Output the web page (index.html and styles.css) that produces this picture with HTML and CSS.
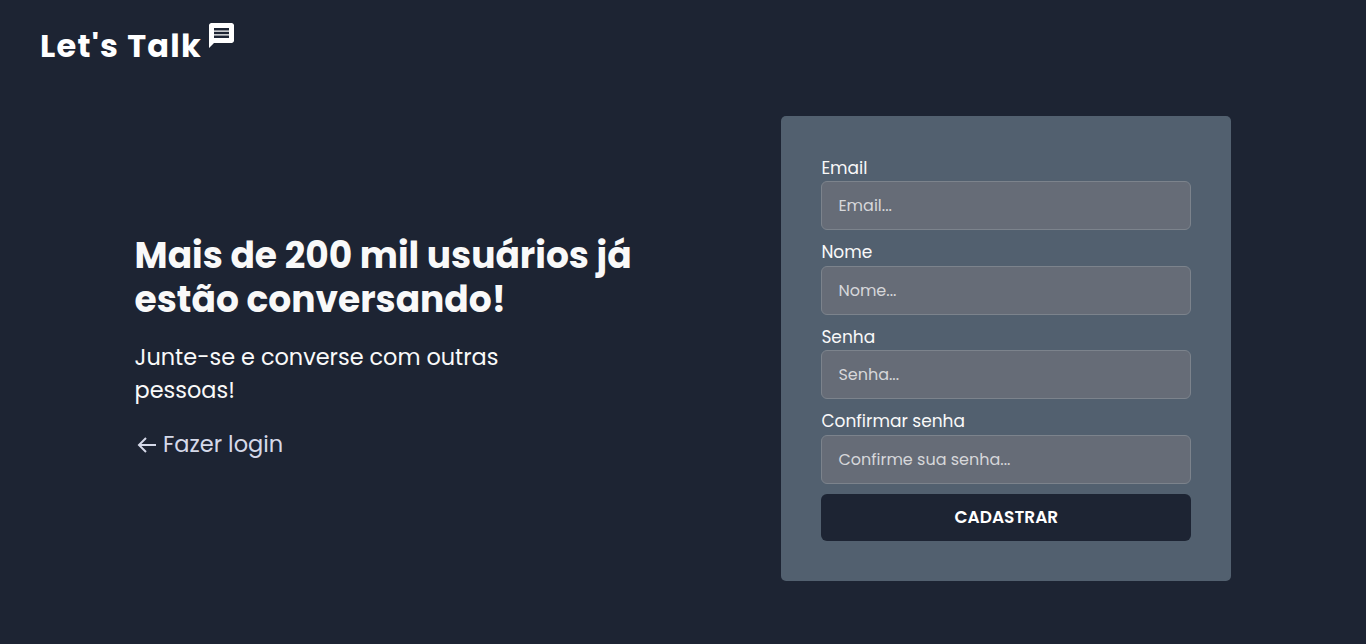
FILE: index.html
```html
<!DOCTYPE html>
<html lang="pt-BR">
<head>
<meta charset="utf-8">
<title>Let's Talk</title>
<link rel="stylesheet" href="styles.css">
</head>
<body>
<header class="header">
  <h1 class="brand">Let's Talk</h1>
  <svg class="brand-icon" viewBox="0 0 24 24" fill="currentColor"><path d="M20 2H4c-1.1 0-1.99.9-1.99 2L2 22l4-4h14c1.1 0 2-.9 2-2V4c0-1.1-.9-2-2-2zm-2 12H6v-2h12v2zm0-3H6V9h12v2zm0-3H6V6h12v2z"/></svg>
</header>
<main class="main">
  <section class="intro">
    <h2 class="title">Mais de 200 mil usuários já<br>estão conversando!</h2>
    <p class="lead">Junte-se e converse com outras<br>pessoas!</p>
    <a class="login"><svg class="arrow" viewBox="0 0 24 24" fill="currentColor"><path d="M21 11H6.414l5.293-5.293-1.414-1.414L2.586 12l7.707 7.707 1.414-1.414L6.414 13H21z"/></svg><span>Fazer login</span></a>
  </section>
  <form class="card">
    <label class="field"><span class="label">Email</span><input class="input" type="email" placeholder="Email..."></label>
    <label class="field"><span class="label">Nome</span><input class="input" type="text" placeholder="Nome..."></label>
    <label class="field"><span class="label">Senha</span><input class="input" type="password" placeholder="Senha..."></label>
    <label class="field"><span class="label">Confirmar senha</span><input class="input" type="password" placeholder="Confirme sua senha..."></label>
    <button class="submit" type="button">CADASTRAR</button>
  </form>
</main>
</body>
</html>
```
FILE: styles.css
```css
* { box-sizing: border-box; margin: 0; padding: 0; }
body {
  min-height: 644px;
  background: #1d2433;
  color: #f9f9f9;
  font-family: Poppins, Inter, "Open Sans", sans-serif;
  overflow: hidden;
}
.header {
  display: flex;
  align-items: flex-start;
  height: 115.8px;
  padding: 20px 40px 0;
  color: #fff;
}
.brand { width: 166px; font-size: 32px; line-height: 51px; font-weight: 700; letter-spacing: 1.25px; white-space: nowrap; }
.brand-icon { width: 30px; height: 30px; transform: translate(0.5px, 0.5px); }
.main { display: flex; justify-content: space-between; padding: 0 135px 0 134.6px; }
.intro { width: 520px; padding-top: 118.2px; }
.title { font-size: 36px; line-height: 44px; font-weight: 700; white-space: nowrap; }
.lead { margin-top: 19px; font-size: 22.4px; line-height: 33px; }
.login { display: flex; align-items: center; gap: 4.4px; margin-top: 21px; font-size: 22.5px; line-height: 33px; color: #d5d9e9; }
.arrow { width: 24px; height: 24px; margin-top: 1.2px; }
.card {
  display: flex;
  flex-direction: column;
  gap: 10px;
  width: 450px;
  height: 465px;
  padding: 40px;
  border-radius: 5px;
  background: #52606f;
}
.field { display: flex; flex-direction: column; }
.label { padding-left: 0.4px; font-size: 17px; line-height: 25.5px; }
.input {
  height: 49px;
  padding: 0 16.4px;
  border: 1px solid #7c838c;
  border-radius: 6px;
  background: #666c77;
  color: #f9f9f9;
  font: 16px Poppins, Inter, "Open Sans", sans-serif;
}
.input::placeholder { color: #d6d7da; opacity: 1; }
.submit {
  height: 47px;
  padding-left: 0.8px;
  border: 0;
  border-radius: 6px;
  background: #1d2433;
  color: #fff;
  font: 600 17px Poppins, Inter, "Open Sans", sans-serif;
}
```
